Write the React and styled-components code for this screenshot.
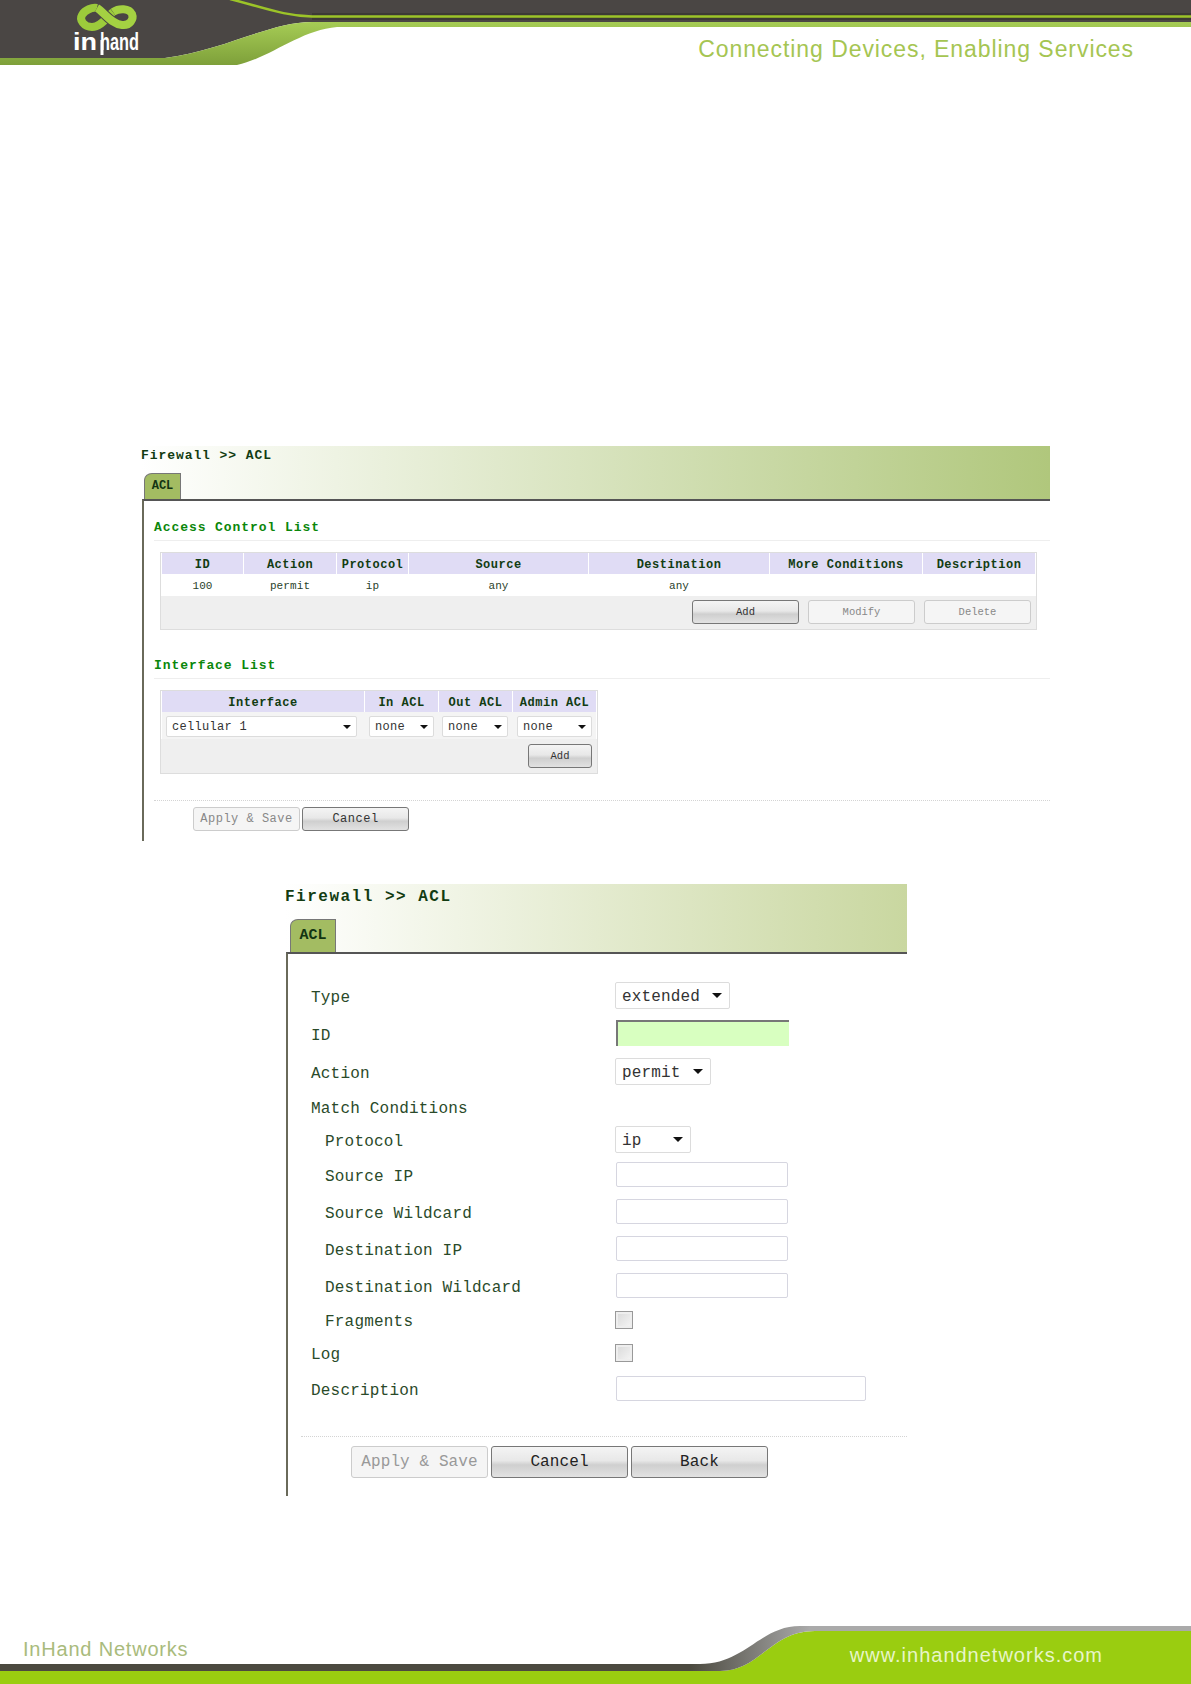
import React from 'react';
import styled, { createGlobalStyle } from 'styled-components';

const MONO = `'Liberation Mono', 'DejaVu Sans Mono', monospace`;
const SANS = `'Liberation Sans', Arial, sans-serif`;

const GlobalStyle = createGlobalStyle`
  html, body {
    margin: 0;
    padding: 0;
    background: #fff;
  }
  * {
    box-sizing: border-box;
  }
`;

function HeaderArt() {
  return (
    <HeaderSvg viewBox="0 0 1191 66" width="1191" height="66">
      <defs>
        <linearGradient id="swoosh" x1="0" y1="0" x2="0" y2="1">
          <stop offset="0" stopColor="#a6cc55" />
          <stop offset="1" stopColor="#7ea03a" />
        </linearGradient>
      </defs>
      <path d="M0 0H1191V22H312C270 22 225 50 165 58H0Z" fill="#4a4644" />
      <path d="M0 58H165C225 50 270 22 312 22H1191V27H337C300 30 270 58 237 65H0Z" fill="url(#swoosh)" />
      <path d="M312 13H1191V20H312Z" fill="#3c3a36" />
      <path d="M230 -1C265 8 285 16 312 16.500H1191" fill="none" stroke="#9cc428" strokeWidth="2.500" />
      <path d="M113 12C107 17 101 27 92 27C84 27 79 20 82 15C85 10 92 7 97 8" fill="none" stroke="#9ccb3b" strokeWidth="8" />
      <path d="M97 8C104 12 111 24 122 25C130 26 134 19 132 14C129 8 119 8 113 12" fill="none" stroke="#4a4644" strokeWidth="10" />
      <path d="M97 8C104 12 111 24 122 25C130 26 134 19 132 14C129 8 119 8 113 12" fill="none" stroke="#a4d142" strokeWidth="8" />
      <text x="73" y="50" fill="#fff" fontFamily={SANS} fontSize="24" fontWeight="700" textLength="24" lengthAdjust="spacingAndGlyphs">in</text>
      <text x="100" y="50" fill="#fff" fontFamily={SANS} fontSize="24" fontWeight="700" textLength="39" lengthAdjust="spacingAndGlyphs">hand</text>
      <path d="M102 40V55" stroke="#fff" strokeWidth="3" />
    </HeaderSvg>
  );
}

function FooterArt() {
  return (
    <FooterSvg viewBox="0 0 1191 60" width="1191" height="60">
      <defs>
        <linearGradient id="bar" x1="0" y1="0" x2="1" y2="0">
          <stop offset="0" stopColor="#4c4a40" />
          <stop offset="0.58" stopColor="#4c4a40" />
          <stop offset="0.68" stopColor="#aaa" />
        </linearGradient>
      </defs>
      <path d="M0 47H720C760 47 770 7 815 7H1191V60H0Z" fill="#9acd10" />
      <path d="M0 40H700C745 40 760 2 800 2H1191V7H815C770 7 760 47 720 47H0Z" fill="url(#bar)" />
    </FooterSvg>
  );
}

function SelectBox({ children, width, big }) {
  return (
    <Select $width={width} $big={big}>
      <SelectValue $big={big}>{children}</SelectValue>
      <Caret $big={big} />
    </Select>
  );
}

const ACL_COLUMNS = ['ID', 'Action', 'Protocol', 'Source', 'Destination', 'More Conditions', 'Description'];
const ACL_ROW = ['100', 'permit', 'ip', 'any', 'any', '', ''];
const FORM_ROWS = [
  { label: 'Type', h: 38, select: 'extended', w: 115 },
  { label: 'ID', h: 38, required: true, w: 173 },
  { label: 'Action', h: 38, select: 'permit', w: 96 },
  { label: 'Match Conditions', h: 32 },
  { label: 'Protocol', h: 34, sub: true, select: 'ip', w: 76 },
  { label: 'Source IP', h: 37, sub: true, w: 172 },
  { label: 'Source Wildcard', h: 37, sub: true, w: 172 },
  { label: 'Destination IP', h: 37, sub: true, w: 172 },
  { label: 'Destination Wildcard', h: 36, sub: true, w: 172 },
  { label: 'Fragments', h: 33, sub: true, check: true },
  { label: 'Log', h: 33, check: true },
  { label: 'Description', h: 38, w: 250 },
];

export default function App() {
  return (
    <Page>
      <GlobalStyle />
      <Header>
        <HeaderArt />
        <Tagline>Connecting Devices, Enabling Services</Tagline>
      </Header>

      <ListPanel>
        <TitleBar $height={53}>
          <Title>Firewall &gt;&gt; ACL</Title>
          <Tab>ACL</Tab>
        </TitleBar>
        <PanelBody>
          <SectionHead>Access Control List</SectionHead>
          <TableBox $width={877} $top={11}>
            <HeadRow $cols="81px 92px 71px 179px 180px 152px 1fr">
              {ACL_COLUMNS.map((name) => (
                <HeadCell key={name}>{name}</HeadCell>
              ))}
            </HeadRow>
            <DataRow $cols="81px 92px 71px 179px 180px 152px 1fr">
              {ACL_ROW.map((value, i) => (
                <DataCell key={i}>{value}</DataCell>
              ))}
            </DataRow>
            <TableFoot>
              <SmallButton>Add</SmallButton>
              <SmallButton disabled>Modify</SmallButton>
              <SmallButton disabled>Delete</SmallButton>
            </TableFoot>
          </TableBox>

          <SectionHead $top={23}>Interface List</SectionHead>
          <TableBox $width={438} $top={11}>
            <HeadRow $cols="202px 73px 73px 1fr">
              <HeadCell>Interface</HeadCell>
              <HeadCell>In ACL</HeadCell>
              <HeadCell>Out ACL</HeadCell>
              <HeadCell>Admin ACL</HeadCell>
            </HeadRow>
            <SelectRow>
              <SelectBox width={191}>cellular 1</SelectBox>
              <SelectBox width={65}>none</SelectBox>
              <SelectBox width={66}>none</SelectBox>
              <SelectBox width={75}>none</SelectBox>
            </SelectRow>
            <TableFoot $height={34}>
              <SmallButton $width={64}>Add</SmallButton>
            </TableFoot>
          </TableBox>

          <Dotted $top={26} />
          <ActionBar $left={39} $top={6}>
            <WideButton disabled>Apply &amp; Save</WideButton>
            <WideButton>Cancel</WideButton>
          </ActionBar>
        </PanelBody>
      </ListPanel>

      <FormPanel>
        <TitleBar $height={68} $big>
          <BigTitle>Firewall &gt;&gt; ACL</BigTitle>
          <Tab $big>ACL</Tab>
        </TitleBar>
        <PanelBody $big>
          {FORM_ROWS.map((row) => (
            <FormRow key={row.label} $h={row.h}>
              <FormLabel $sub={row.sub}>{row.label}</FormLabel>
              {row.select && (
                <SelectBox width={row.w} big>
                  {row.select}
                </SelectBox>
              )}
              {row.required && <RequiredInput />}
              {row.check && <CheckBox />}
              {!row.select && !row.required && !row.check && row.w && <TextInput $width={row.w} />}
            </FormRow>
          ))}
          <Dotted $top={29} $left={4} />
          <ActionBar $left={54} $top={9} $gap={3}>
            <BigButton disabled>Apply &amp; Save</BigButton>
            <BigButton>Cancel</BigButton>
            <BigButton>Back</BigButton>
          </ActionBar>
        </PanelBody>
      </FormPanel>

      <Footer>
        <FooterArt />
        <FooterLeft>InHand Networks</FooterLeft>
        <FooterRight>www.inhandnetworks.com</FooterRight>
      </Footer>
    </Page>
  );
}

const Page = styled.div`
  width: 1191px;
  height: 1684px;
  display: flex;
  flex-direction: column;
  overflow: hidden;
  font-family: ${MONO};
`;

const Header = styled.header`
  position: relative;
  height: 66px;
  flex-shrink: 0;
  display: flex;
  justify-content: flex-end;
  padding: 35px 57px 0 0;
`;

const HeaderSvg = styled.svg`
  position: absolute;
  top: 0;
  left: 0;
`;

const Tagline = styled.div`
  position: relative;
  font-family: ${SANS};
  font-size: 23px;
  line-height: 28px;
  letter-spacing: 0.93px;
  color: #a5c552;
`;

const ListPanel = styled.section`
  width: 909px;
  margin: 380px 0 0 141px;
`;

const FormPanel = styled.section`
  width: 622px;
  margin: 43px 0 0 285px;
`;

const TitleBar = styled.div`
  height: ${(p) => p.$height}px;
  padding-top: ${(p) => (p.$big ? 3 : 2)}px;
  background: linear-gradient(90deg, #fff 0%, ${(p) => (p.$big ? '#c9d7a0' : '#b0c77c')} 100%);
  display: flex;
  flex-direction: column;
`;

const Title = styled.div`
  font-size: 13px;
  font-weight: 700;
  line-height: 16px;
  letter-spacing: 0.93px;
  color: #123c12;
`;

const BigTitle = styled.div`
  font-size: 16px;
  font-weight: 700;
  line-height: 20px;
  letter-spacing: 1.5px;
  color: #123c12;
`;

const Tab = styled.div`
  margin: ${(p) => (p.$big ? '12px 0 0 5px' : '9px 0 0 3px')};
  width: ${(p) => (p.$big ? 46 : 37)}px;
  height: ${(p) => (p.$big ? 33 : 26)}px;
  border: 1px solid #777;
  border-bottom: none;
  border-top-left-radius: 8px 7px;
  background: #a3bc62;
  font-size: ${(p) => (p.$big ? 15 : 12)}px;
  font-weight: 700;
  line-height: ${(p) => (p.$big ? 31 : 24)}px;
  text-align: center;
  color: #123412;
`;

const PanelBody = styled.div`
  position: relative;
  border-top: 2px solid #555;
  border-left: 2px solid #6a6a5a;
  margin-left: 1px;
  padding: ${(p) => (p.$big ? '22px 0 18px 9px' : '0 0 10px 10px')};
`;

const SectionHead = styled.h2`
  margin: ${(p) => p.$top ?? 14}px 0 0;
  padding-top: 1px;
  height: 26px;
  font-size: 13px;
  font-weight: 700;
  line-height: 24px;
  letter-spacing: 0.93px;
  color: #0b870b;
  border-bottom: 1px solid #eee;
`;

const TableBox = styled.div`
  width: ${(p) => p.$width}px;
  margin: ${(p) => p.$top}px 0 0 6px;
  padding: 0 1px;
  border: 1px solid #ddd;
  background: #fff;
`;

const HeadRow = styled.div`
  display: grid;
  grid-template-columns: ${(p) => p.$cols};
  gap: 1px;
  height: 21px;
  background: #fff;
`;

const HeadCell = styled.div`
  background: #e0dcf5;
  font-size: 12px;
  font-weight: 700;
  line-height: 25px;
  height: 21px;
  overflow: hidden;
  letter-spacing: 0.5px;
  text-align: center;
  color: #123c12;
  white-space: nowrap;
`;

const DataRow = styled.div`
  display: grid;
  grid-template-columns: ${(p) => p.$cols};
  gap: 1px;
  height: 22px;
`;

const DataCell = styled.div`
  font-size: 11px;
  line-height: 25px;
  letter-spacing: 0.1px;
  text-align: center;
  color: #2b3f2b;
`;

const SelectRow = styled.div`
  display: grid;
  grid-template-columns: 202px 72px 74px 1fr;
  gap: 1px;
  height: 27px;
  padding: 4px 0 0 4px;
  background: #f4f4f4;
`;

const TableFoot = styled.div`
  height: ${(p) => p.$height ?? 33}px;
  background: #efefef;
  display: flex;
  justify-content: flex-end;
  align-items: center;
  gap: 9px;
  padding: 0 5px 1px 0;
  margin: 0 -1px;
`;

const buttonBase = `
  font-family: ${MONO};
  border-radius: 3px;
  padding: 0;
  text-align: center;
`;

const SmallButton = styled.button`
  ${buttonBase}
  width: ${(p) => p.$width ?? 107}px;
  height: 24px;
  font-size: 10.5px;
  border: 1px solid ${(p) => (p.disabled ? '#ccc' : '#777')};
  color: ${(p) => (p.disabled ? '#888' : '#333')};
  background: ${(p) => (p.disabled ? '#f5f5f5' : 'linear-gradient(#f4f4f4 0%, #e8e8e8 45%, #cfcfcf 60%, #e2e2e2 100%)')};
`;

const WideButton = styled(SmallButton)`
  font-size: 12px;
  letter-spacing: 0.5px;
  width: 107px;
`;

const BigButton = styled.button`
  ${buttonBase}
  width: 137px;
  height: 32px;
  font-size: 16px;
  letter-spacing: 0.1px;
  border: 1px solid ${(p) => (p.disabled ? '#ccc' : '#777')};
  color: ${(p) => (p.disabled ? '#999' : '#222')};
  background: ${(p) => (p.disabled ? '#f5f5f5' : 'linear-gradient(#f4f4f4 0%, #e8e8e8 45%, #cfcfcf 60%, #e2e2e2 100%)')};
`;

const Dotted = styled.div`
  height: 1px;
  margin: ${(p) => p.$top}px 0 0 ${(p) => p.$left ?? 0}px;
  border-top: 1px dotted #d4d4d4;
`;

const ActionBar = styled.div`
  display: flex;
  gap: ${(p) => p.$gap ?? 2}px;
  margin: ${(p) => p.$top}px 0 0 ${(p) => p.$left}px;
`;

const Select = styled.div`
  width: ${(p) => p.$width}px;
  height: ${(p) => (p.$big ? 27 : 21)}px;
  display: flex;
  align-items: center;
  justify-content: space-between;
  padding: 0 ${(p) => (p.$big ? 7 : 5)}px 0 ${(p) => (p.$big ? 6 : 5)}px;
  border: 1px solid #dcdcdc;
  border-radius: 2px;
  background: #fff;
  font-size: ${(p) => (p.$big ? 16 : 12)}px;
  letter-spacing: ${(p) => (p.$big ? 0.15 : 0.3)}px;
  color: #333;
  white-space: nowrap;
`;

const SelectValue = styled.span`
  padding-top: ${(p) => (p.$big ? 3 : 0)}px;
`;

const Caret = styled.i`
  width: 0;
  height: 0;
  border-left: ${(p) => (p.$big ? 5 : 4)}px solid transparent;
  border-right: ${(p) => (p.$big ? 5 : 4)}px solid transparent;
  border-top: ${(p) => (p.$big ? 5 : 4)}px solid #111;
`;

const FormRow = styled.div`
  height: ${(p) => p.$h}px;
  display: grid;
  grid-template-columns: 318px 1fr;
  align-items: center;
`;

const FormLabel = styled.div`
  padding: 5px 0 0 ${(p) => (p.$sub ? 28 : 14)}px;
  font-size: 16px;
  letter-spacing: 0.2px;
  color: #2a4a2a;
  white-space: nowrap;
`;

const TextInput = styled.div`
  width: ${(p) => p.$width}px;
  height: 25px;
  margin-left: 1px;
  border: 1px solid #d6d6e0;
  border-radius: 2px;
  background: #fff;
`;

const RequiredInput = styled.div`
  width: 173px;
  height: 26px;
  margin-left: 1px;
  border-top: 2px solid #777;
  border-left: 2px solid #777;
  background: #d8ffc0;
`;

const CheckBox = styled.div`
  width: 18px;
  height: 18px;
  border: 1px solid #999;
  background: linear-gradient(135deg, #d8d8d8, #f6f6f6);
  box-shadow: inset 0 0 0 2px #eee;
`;

const Footer = styled.footer`
  position: relative;
  margin-top: auto;
  height: 60px;
  flex-shrink: 0;
  display: flex;
  justify-content: space-between;
  align-items: flex-start;
  padding: 11px 88px 0 23px;
`;

const FooterSvg = styled.svg`
  position: absolute;
  top: 0;
  left: 0;
`;

const FooterLeft = styled.div`
  position: relative;
  margin-top: 2px;
  font-family: ${SANS};
  font-size: 20px;
  line-height: 24px;
  letter-spacing: 0.8px;
  color: #a9bb7c;
`;

const FooterRight = styled.div`
  position: relative;
  margin-top: 8px;
  font-family: ${SANS};
  font-size: 20px;
  line-height: 24px;
  letter-spacing: 1px;
  color: #e8f5c8;
`;
